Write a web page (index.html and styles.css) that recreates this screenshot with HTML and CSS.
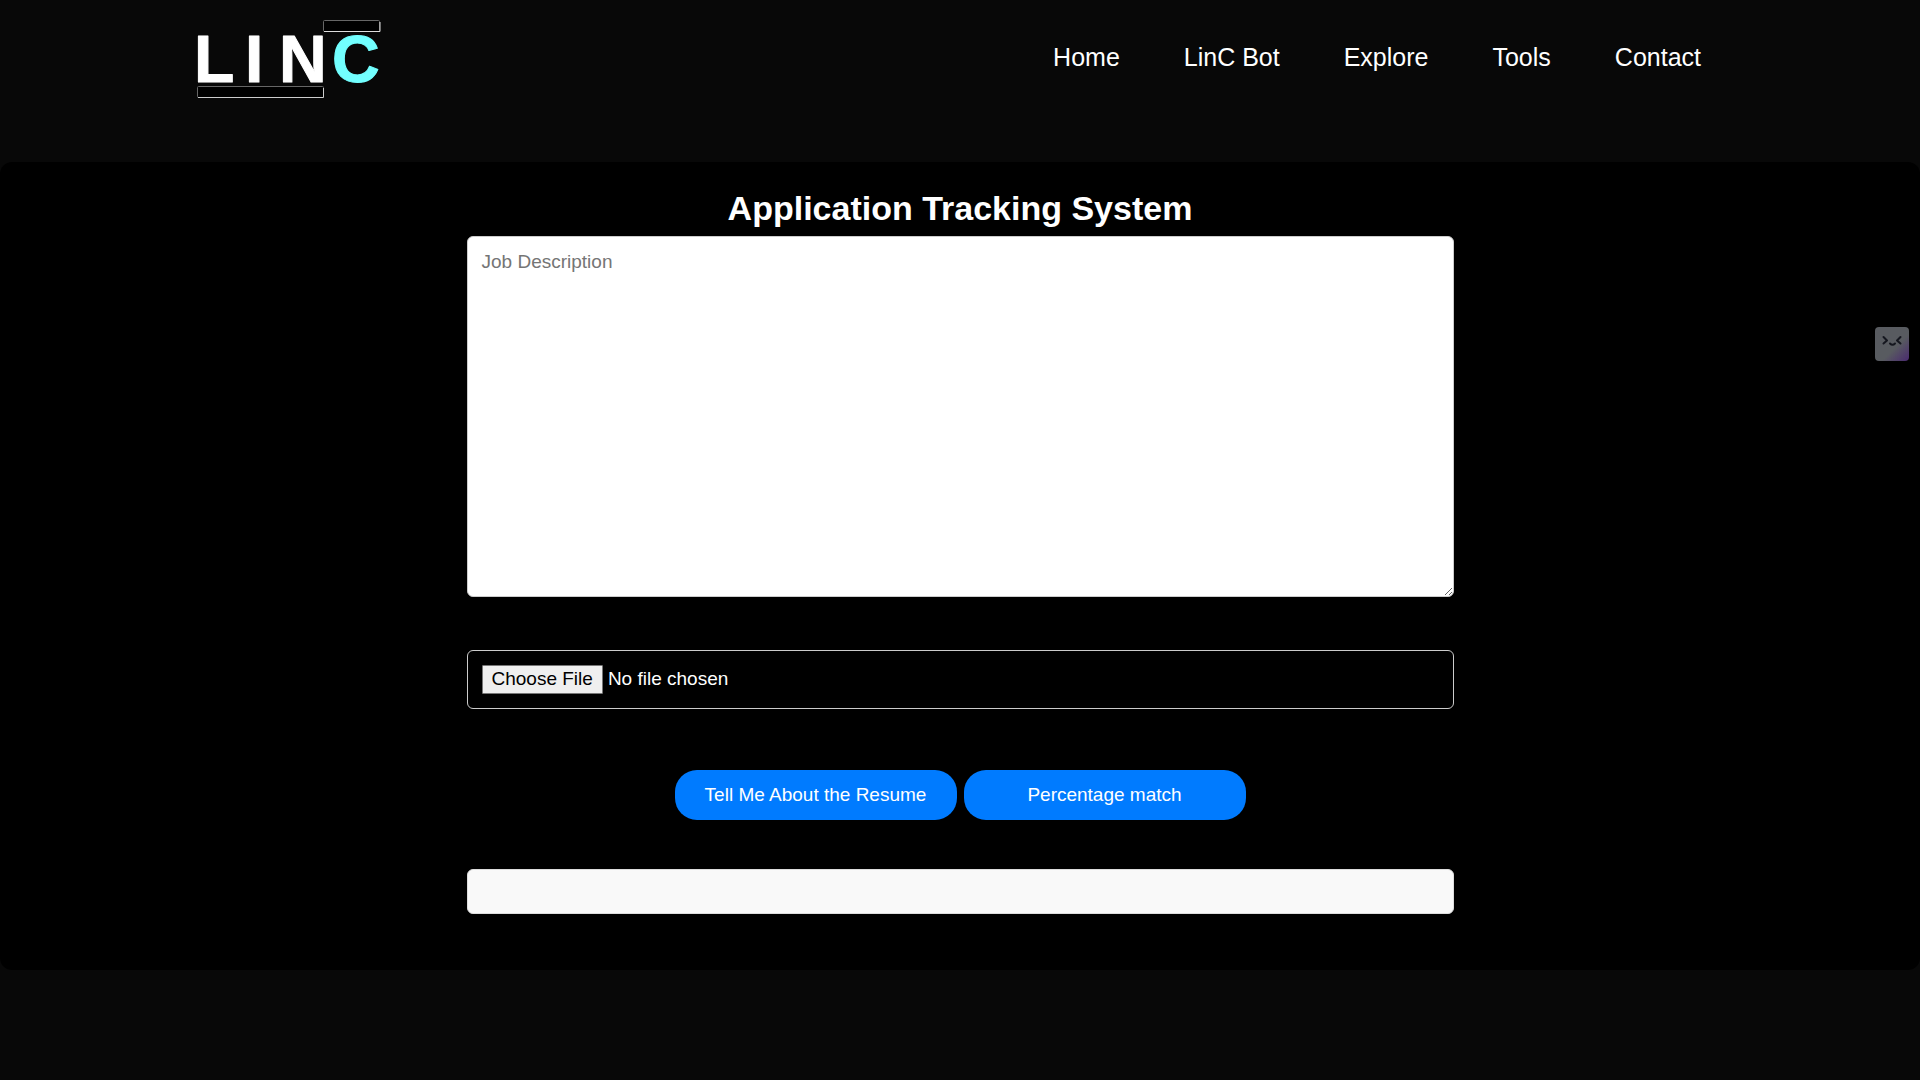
FILE: index.html
```html
<!DOCTYPE html>
<html lang="en">
<head>
  <meta charset="utf-8">
  <meta name="viewport" content="width=device-width, initial-scale=1">
  <title>LinC - Application Tracking System</title>
  <link rel="stylesheet" href="styles.css">
</head>
<body>
  <header class="site-header">
    <a class="logo" href="#" aria-label="LinC home">
      <svg width="192" height="120" viewBox="0 0 192 120">
        <rect x="131.5" y="20.5" width="56" height="11" rx="1" fill="#000" stroke="#666"/>
        <path d="M132 31.5H188V22" fill="none" stroke="#ddd"/>
        <rect x="5.500" y="86.500" width="126" height="11" rx="1" fill="#000" stroke="#666"/>
        <path d="M6 97.5H131.500V88" fill="none" stroke="#ccc"/>
        <text class="logo-word" x="2 53 87" y="82">LIN</text>
        <text class="logo-word logo-accent" x="140" y="82">C</text>
      </svg>
    </a>
    <nav class="site-nav">
      <a href="#">Home</a>
      <a href="#">LinC Bot</a>
      <a href="#">Explore</a>
      <a href="#">Tools</a>
      <a href="#">Contact</a>
    </nav>
  </header>

  <main class="panel">
    <h1 class="panel-title">Application Tracking System</h1>
    <form class="tracker">
      <textarea class="field description" placeholder="Job Description" aria-label="Job Description"></textarea>
      <input class="field upload" type="file" aria-label="Resume">
      <div class="actions">
        <button class="action" type="button">Tell Me About the Resume</button>
        <button class="action" type="button">Percentage match</button>
      </div>
      <output class="field result"></output>
    </form>
  </main>

  <button class="assistant" type="button" aria-label="Open assistant">
    <svg width="34" height="34" viewBox="0 0 34 34" fill="none" stroke="#15171f" stroke-width="2" stroke-linecap="round" stroke-linejoin="round">
      <path d="M8.500 10L12 13.500L8.500 16.500M25.500 10L22 13.500L25.500 16.500M15 16.500Q17.500 19 20 16.500"/>
    </svg>
  </button>
</body>
</html>
```
FILE: styles.css
```css
* {
  box-sizing: border-box;
}

body {
  margin: 0;
  min-height: 100vh;
  background: #080808;
  color: #fff;
  font-family: "Liberation Sans", Arial, sans-serif;
}

.site-header {
  display: flex;
  align-items: flex-start;
  justify-content: space-between;
  padding: 0 10%;
  margin-bottom: 42px;
}

.logo,
.logo svg {
  display: block;
}

.logo-word {
  font-size: 66px;
  font-weight: bold;
  fill: #fff;
  stroke: #fff;
  stroke-width: 1px;
  stroke-linejoin: round;
}

.logo-accent {
  fill: #72ffff;
  stroke: #72ffff;
}

.site-nav {
  display: flex;
  flex-wrap: wrap;
  gap: 64px;
  padding: 42px 27px 0 0;
}

.site-nav a {
  color: #fff;
  font-size: 25px;
  line-height: 30px;
  text-decoration: none;
}

.panel {
  padding: 25px 25px 56px;
  border-radius: 12px;
  background: #000;
}

.panel-title {
  margin: 0 0 6px;
  font-size: 34px;
  line-height: 43px;
  text-align: center;
}

.tracker {
  display: flex;
  flex-direction: column;
  width: 100%;
  max-width: 987px;
  margin: 0 auto;
}

.field {
  display: block;
  width: 100%;
  padding: 14px;
  border: 1px solid #ccc;
  border-radius: 6px;
  font-family: inherit;
  font-size: 19px;
}

.description {
  height: 361px;
  margin-bottom: 53px;
  background: #fff;
  color: #000;
  resize: vertical;
}

.upload {
  height: 59px;
  margin-bottom: 61px;
  color: #fff;
}

.upload::file-selector-button {
  height: 29px;
  margin-right: 5px;
  padding: 0 9px 2px;
  border: 1px solid #767676;
  border-radius: 1px;
  background: #efefef;
  color: #000;
  font: inherit;
}

.actions {
  display: flex;
  flex-wrap: wrap;
  justify-content: center;
  gap: 7px;
  margin-bottom: 49px;
}

.action {
  width: 282px;
  height: 50px;
  padding: 0 12px;
  border: 0;
  border-radius: 22px;
  background: #007bff;
  color: #fff;
  font-family: inherit;
  font-size: 19px;
}

.result {
  min-height: 45px;
  border-color: #ddd;
  background: #f9f9f9;
  color: #000;
}

.assistant {
  position: fixed;
  top: 327px;
  right: 11px;
  width: 34px;
  height: 34px;
  padding: 0;
  border: 0;
  border-radius: 4px;
  background: linear-gradient(135deg, #585b60 60%, #4a2a70 100%);
}

.assistant svg {
  display: block;
}
```
